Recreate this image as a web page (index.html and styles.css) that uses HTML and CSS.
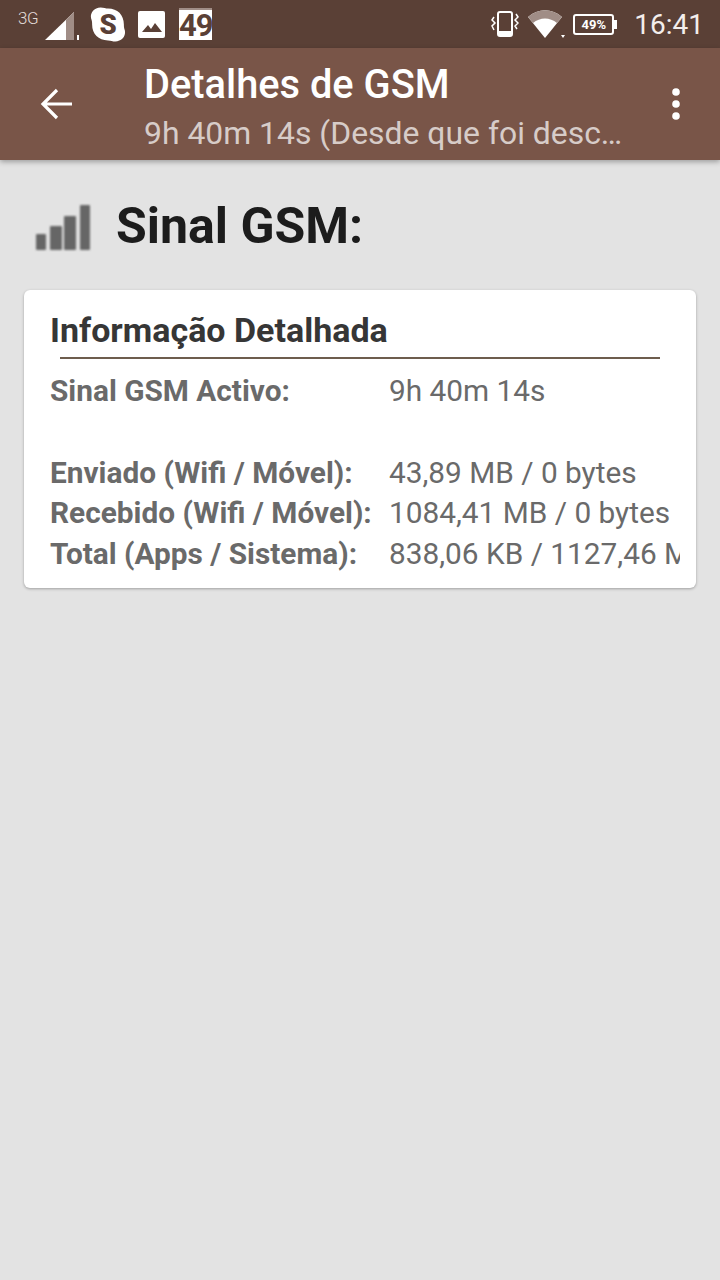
FILE: index.html
```html
<!DOCTYPE html>
<html lang="pt">
  <head>
    <meta charset="UTF-8" />
    <meta name="viewport" content="width=device-width, initial-scale=1.0" />
    <title>Detalhes de GSM</title>
    <link rel="stylesheet" href="styles.css">
  </head>
  <body>
    <div class="statusbar">
      <div class="statusbar_left">
        <span class="net_type">3G</span>
        <svg class="ic_cell" width="36" height="30" viewBox="0 0 36 30">
          <polygon points="0,28 29,0 29,28" fill="#fff"/>
          <polygon points="21,7.700 29,0 29,28 21,28" fill="#a08d86"/>
          <rect x="32" y="23" width="2" height="5" fill="#fff"/>
        </svg>
        <svg class="ic_skype" width="36" height="37" viewBox="0 0 34 34">
          <path d="M10 1c3 0 5 1 7 1 9 0 15 6 15 15 0 2 0 3 1 6 1 6-4 10-9 10-3 0-4-1-7-1C8 32 2 26 2 17c0-2 0-3-1-6C0 6 4 1 10 1z" fill="#fff"/>
          <text x="17" y="26" class="ic_skype_s">S</text>
        </svg>
        <svg class="ic_image" width="28" height="27" viewBox="0 0 28 27">
          <rect width="27" height="27" rx="2" fill="#fff"/>
          <path d="M4 21l6-7 3 4 4-6 7 9z" fill="#5a4036"/>
        </svg>
        <div class="ic_calendar">49</div>
      </div>
      <div class="statusbar_right">
        <svg class="ic_vibrate" width="28" height="26" viewBox="0 0 28 26">
          <rect x="7" y="1" width="14" height="24" rx="2" fill="none" stroke="#fff" stroke-width="2"/>
          <rect x="8" y="20" width="12" height="4" fill="#fff"/>
          <path d="M3 6L1 9l3 3-3 3 2 4M25 3l2 3-3 3 3 3-3 3 2 3" fill="none" stroke="#fff" stroke-width="1.500"/>
        </svg>
        <svg class="ic_wifi" width="38" height="29" viewBox="0 0 38 29">
          <path d="M0 7C10-2 24-2 34 7L17 28z" fill="#fff"/>
          <path d="M0 7C10-2 24-2 34 7L29 13C22 7 12 7 5 13z" fill="#a08d86"/>
          <polygon points="33,25 37,25 35,28" fill="#fff"/>
        </svg>
        <div class="ic_battery">
          <span class="battery_level">49%</span>
        </div>
        <span class="clock">16:41</span>
      </div>
    </div>

    <nav class="toolbar">
      <svg class="ic_back" width="34" height="34" viewBox="0 0 34 34">
        <path d="M32 17H3M17 3L3 17l14 14" fill="none" stroke="#fff" stroke-width="3.200"/>
      </svg>
      <div class="toolbar_titles">
        <div class="toolbar_title">Detalhes de GSM</div>
        <div class="toolbar_sub">9h 40m 14s (Desde que foi desc…</div>
      </div>
      <svg class="ic_more" width="8" height="32" viewBox="0 0 8 32">
        <circle cx="4" cy="4" r="3.800" fill="#fff"/>
        <circle cx="4" cy="16" r="3.800" fill="#fff"/>
        <circle cx="4" cy="28" r="3.800" fill="#fff"/>
      </svg>
    </nav>

    <main class="content">
      <div class="heading">
        <svg class="ic_signal" width="54" height="46" viewBox="0 0 54 46">
          <rect x="0" y="29" width="10" height="16" rx="1" fill="#666"/>
          <rect x="14" y="21" width="12" height="24" rx="1" fill="#666"/>
          <rect x="28" y="11" width="12" height="34" rx="1" fill="#666"/>
          <rect x="44" y="0" width="10" height="45" rx="1" fill="#666"/>
        </svg>
        <h1>Sinal GSM:</h1>
      </div>

      <section class="card">
        <h2>Informação Detalhada</h2>
        <div class="card_line"></div>
        <div class="stats">
          <div class="stat_row"><span class="stat_name">Sinal GSM Activo:</span><span class="stat_val">9h 40m 14s</span></div>
          <div class="stat_row stat_gap"><span class="stat_name">Enviado (Wifi / Móvel):</span><span class="stat_val">43,89 MB / 0 bytes</span></div>
          <div class="stat_row"><span class="stat_name">Recebido (Wifi / Móvel):</span><span class="stat_val">1084,41 MB / 0 bytes</span></div>
          <div class="stat_row"><span class="stat_name">Total (Apps / Sistema):</span><span class="stat_val">838,06 KB / 1127,46 MB</span></div>
        </div>
      </section>
    </main>
  </body>
</html>
```

FILE: styles.css
```css
* {
  box-sizing: border-box;
}

html,
body {
  height: 100%;
}

body {
  margin: 0;
  font-family: Roboto, sans-serif;
  background: #e3e3e3;
  overflow: hidden;
}

.statusbar {
  display: flex;
  justify-content: space-between;
  align-items: center;
  height: 48px;
  padding: 0 16px 0 18px;
  background: #5a4036;
  color: white;
}

.statusbar_left,
.statusbar_right {
  display: flex;
  align-items: center;
}

.net_type {
  align-self: flex-start;
  margin-top: 2px;
  font-size: 17px;
  font-weight: 300;
  letter-spacing: -0.5px;
  color: #e3dbd8;
}

.ic_cell {
  margin: 5px 0 0 7px;
}

.ic_skype {
  margin-left: 9px;
}

.ic_image {
  margin-left: 12px;
}

.ic_calendar {
  width: 33px;
  height: 32px;
  margin-left: 13px;
  background: white;
  border-top: 2px solid #a08d86;
  color: #5a4036;
  font-size: 31px;
  font-weight: 700;
  line-height: 31px;
  text-align: center;
  letter-spacing: -1px;
}

.ic_skype_s {
  font-family: Roboto, sans-serif;
  font-size: 26px;
  font-weight: 900;
  fill: #5a4036;
  text-anchor: middle;
}

.ic_wifi {
  margin-left: 9px;
}

.ic_battery {
  position: relative;
  width: 41px;
  height: 21px;
  margin-left: 7px;
  border: 2px solid white;
  border-radius: 3px;
  text-align: center;
}

.ic_battery::after {
  content: "";
  position: absolute;
  top: 4px;
  right: -5px;
  width: 3px;
  height: 9px;
  background: white;
}

.battery_level {
  display: block;
  font-size: 13px;
  font-weight: 700;
  line-height: 17px;
}

.clock {
  margin-left: 20px;
  font-size: 28px;
  color: #f3eeec;
}

.toolbar {
  position: relative;
  display: flex;
  align-items: center;
  height: 112px;
  padding: 0 40px;
  background: #795548;
  box-shadow: 0 2px 5px rgba(0, 0, 0, 0.3);
}

.toolbar_titles {
  flex: 1;
  padding-top: 10px;
  margin-left: 70px;
}

.toolbar_title {
  font-size: 39.800px;
  font-weight: 500;
  line-height: 48px;
  color: white;
}

.toolbar_sub {
  font-size: 31.900px;
  line-height: 48px;
  color: #d7ccc8;
}

.ic_more {
  margin-right: 0;
}

.content {
  padding: 0 24px;
}

.heading {
  display: flex;
  align-items: center;
  height: 130px;
  padding-left: 12px;
}

.heading h1 {
  margin: 2px 0 0 26px;
  font-size: 50px;
  font-weight: 700;
  color: #1c1c1c;
}

.ic_signal {
  margin-top: 5px;
  filter: blur(0.8px);
}

.card {
  height: 298px;
  padding: 18px 16px 0 26px;
  background: white;
  border-radius: 6px;
  box-shadow: 0 1px 3px rgba(0, 0, 0, 0.3);
}

.card h2 {
  margin: 0;
  font-size: 34px;
  font-weight: 700;
  line-height: 44px;
  color: #363636;
}

.card_line {
  width: 600px;
  height: 2px;
  margin: 5px 0 0 10px;
  background: #6d5d4e;
}

.stats {
  margin-top: 12px;
  font-size: 29.800px;
  line-height: 40.500px;
  color: #6a6a6a;
}

.stat_row {
  display: flex;
}

.stat_gap {
  margin-top: 41px;
}

.stat_name {
  flex: none;
  width: 339px;
  font-weight: 700;
  white-space: nowrap;
}

.stat_val {
  overflow: hidden;
  white-space: nowrap;
}
```
